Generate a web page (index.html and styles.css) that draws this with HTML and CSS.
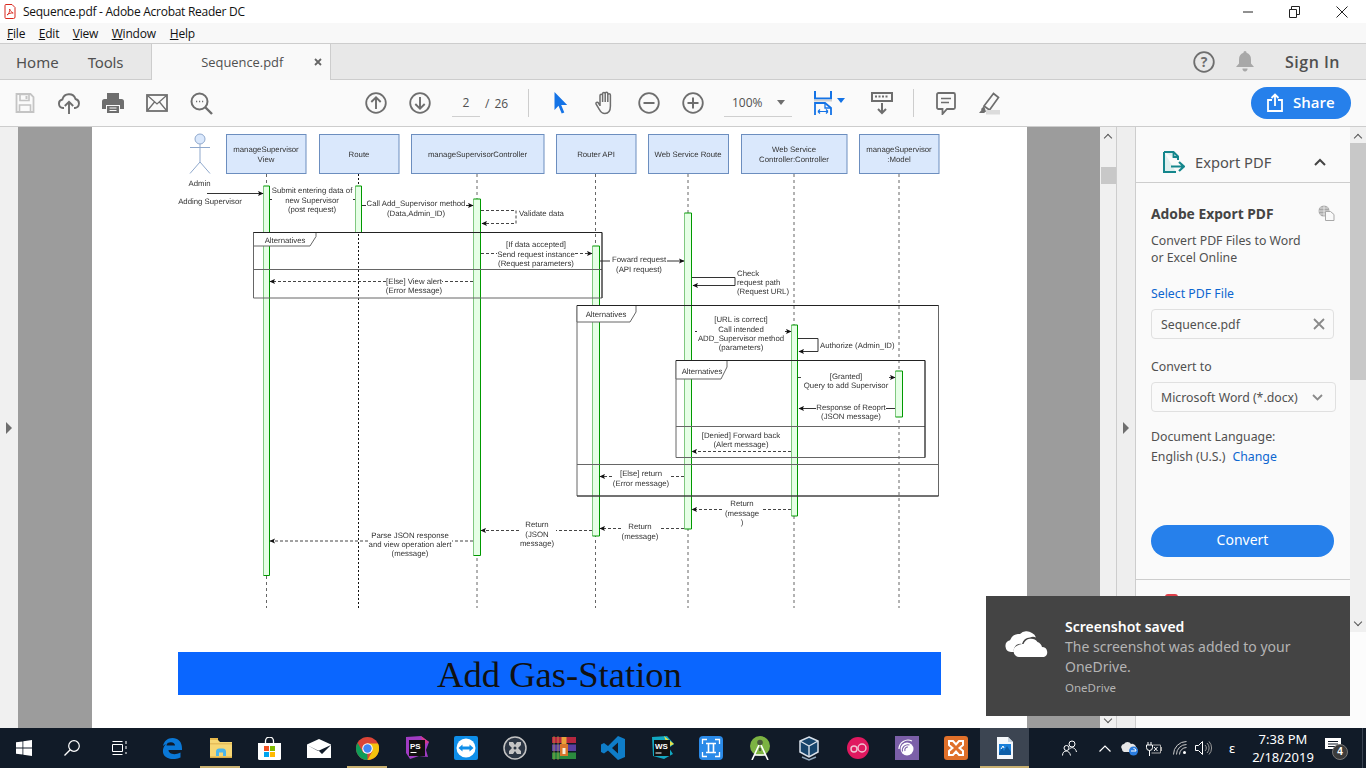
FILE: index.html
```html
<!DOCTYPE html>
<html lang="en">
<head>
<meta charset="utf-8">
<title>Sequence.pdf - Adobe Acrobat Reader DC</title>
<link rel="stylesheet" href="styles.css">
</head>
<body>
<div class="app">
  <header class="titlebar">
    <svg class="pdf-ico" width="12" height="15" viewBox="0 0 11 15"><path d="M1.500.5h6l3 3v9.500a1.500 1.500 0 0 1-1.500 1.500h-7.500a1 1 0 0 1-1-1v-12a1 1 0 0 1 1-1z" fill="#fff" stroke="#d8261c"/><path d="M2.500 11c2-1 3-4 2.600-6 .8 2 2 3.500 3.600 4-2-.2-4.500.4-6.200 2z" fill="none" stroke="#d8261c" stroke-width=".9"/></svg>
    <span class="title-text">Sequence.pdf - Adobe Acrobat Reader DC</span>
    <div class="winctl">
      <svg width="10" height="2" viewBox="0 0 10 2"><path d="M0 1h10" stroke="#222"/></svg>
      <svg width="11" height="12" viewBox="0 0 11 12"><path d="M.5 3.500h7v8h-7zM2.500 3.500v-3h8v8h-3" fill="none" stroke="#222"/></svg>
      <svg width="12" height="12" viewBox="0 0 12 12"><path d="M.5.5l11 11M11.500.5l-11 11" stroke="#222"/></svg>
    </div>
  </header>
  <nav class="menubar">
    <span class="menu"><u>F</u>ile</span><span class="menu"><u>E</u>dit</span><span class="menu"><u>V</u>iew</span><span class="menu"><u>W</u>indow</span><span class="menu"><u>H</u>elp</span>
  </nav>
  <div class="tabbar">
    <span class="tab-link tab-home">Home</span>
    <span class="tab-link tab-tools">Tools</span>
    <div class="doc-tab">
      <span class="doc-tab-name">Sequence.pdf</span>
      <svg class="doc-tab-x" width="8" height="8" viewBox="0 0 8 8"><path d="M1 1l6 6M7 1l-6 6" stroke="#666" stroke-width="1.800"/></svg>
    </div>
    <div class="tab-right">
      <svg width="22" height="22" viewBox="0 0 22 22"><circle cx="11" cy="11" r="9.800" fill="none" stroke="#6e6e6e" stroke-width="1.800"/><text x="11" y="16" class="help-q">?</text></svg>
      <svg class="bell" width="18" height="21" viewBox="0 0 18 21"><path d="M9 0c1 0 1.500.8 1.500 1.800 3 .8 4.500 3.300 4.500 6.700v4l3 3.500H0l3-3.500v-4c0-3.400 1.500-5.900 4.500-6.700C7.500.8 8 0 9 0zM6.500 17.500h5A2.500 2.500 0 0 1 9 20.500a2.500 2.500 0 0 1-2.500-3z" fill="#a8a8a8"/></svg>
      <span class="signin">Sign In</span>
    </div>
  </div>
  <div class="toolbar">
    <div class="tgroup">
      <svg width="22" height="22" viewBox="0 0 22 22"><path d="M2.500 2h14l3 3v15h-17z" fill="none" stroke="#c4c4c4" stroke-width="1.800"/><path d="M6 2.500h9v6H6zM5.500 13h11v7h-11z" fill="none" stroke="#c4c4c4" stroke-width="1.600"/><path d="M11.500 4h2v3h-2z" fill="#c4c4c4"/></svg>
      <svg width="22" height="22" viewBox="0 0 22 22"><path d="M6 16H5a4.300 4.300 0 0 1-.6-8.500A6.800 6.800 0 0 1 17.500 7a4.600 4.600 0 0 1-.5 9h-1" fill="none" stroke="#6e6e6e" stroke-width="1.900"/><path d="M11 22V10M6.800 14l4.200-4.200 4.200 4.200" fill="none" stroke="#6e6e6e" stroke-width="1.900"/></svg>
      <svg width="22" height="22" viewBox="0 0 22 22"><path d="M5 1h12v6H5z" fill="#6e6e6e"/><path d="M2.500 7h17A2.500 2.500 0 0 1 22 9.500V17h-4v-4H4v4H0V9.500A2.500 2.500 0 0 1 2.500 7z" fill="#6e6e6e"/><path d="M5 14h12v7H5z" fill="#6e6e6e"/><path d="M7.500 16h7M7.500 18.500h7" stroke="#fafafa" stroke-width="1.100"/></svg>
      <svg width="22" height="22" viewBox="0 0 22 22"><rect x="1" y="3" width="20" height="16" fill="none" stroke="#6e6e6e" stroke-width="1.800"/><path d="M1.500 3.500L11 12l9.500-8.500M1.500 18.500L8.500 10M20.500 18.500L13.500 10" fill="none" stroke="#6e6e6e" stroke-width="1.300"/></svg>
      <svg width="23" height="23" viewBox="0 0 23 23"><circle cx="9.500" cy="9.500" r="8" fill="none" stroke="#6e6e6e" stroke-width="2"/><path d="M15 15l7 7" stroke="#6e6e6e" stroke-width="2.400"/><path d="M6 9.500h1.200M9 9.500h1.200M12 9.500h1.200" stroke="#6e6e6e" stroke-width="1.500"/></svg>
    </div>
    <div class="tgroup tg-nav">
      <svg width="22" height="22" viewBox="0 0 22 22"><circle cx="11" cy="11" r="9.800" fill="none" stroke="#6e6e6e" stroke-width="1.800"/><path d="M11 17V5.500M6.300 10L11 5.300 15.700 10" fill="none" stroke="#6e6e6e" stroke-width="1.900"/></svg>
      <svg width="22" height="22" viewBox="0 0 22 22"><circle cx="11" cy="11" r="9.800" fill="none" stroke="#6e6e6e" stroke-width="1.800"/><path d="M11 5v11.500M6.300 12L11 16.700 15.700 12" fill="none" stroke="#6e6e6e" stroke-width="1.900"/></svg>
    </div>
    <div class="pager"><span class="page-input">2</span><span class="page-slash">/</span><span class="page-total">26</span></div>
    <span class="tsep sep-a"></span>
    <div class="tgroup tg-tools">
      <svg width="22" height="22" viewBox="0 0 22 22"><path d="M4.500 0v18l4-4.300 3.200 7.800 2.600-1.100-3.100-7.500h6z" fill="#1473e6"/></svg>
      <svg width="22" height="24" viewBox="0 0 22 24"><path d="M6 15V4.500a1.300 1.300 0 0 1 2.600 0V11M8.600 11V2.800a1.300 1.300 0 0 1 2.600 0V11M11.200 11V2.500a1.300 1.300 0 0 1 2.600 0V11M13.800 11V4a1.300 1.300 0 0 1 2.600 0v11c0 5-2 7.500-5.500 7.500-3 0-4.300-1.500-5.500-4L2 13c-.6-1.400 1.400-2.500 2.300-1.200L6 14.500" fill="none" stroke="#6e6e6e" stroke-width="1.500"/></svg>
      <svg width="22" height="22" viewBox="0 0 22 22"><circle cx="11" cy="11" r="9.800" fill="none" stroke="#6e6e6e" stroke-width="1.800"/><path d="M5.500 11h11" stroke="#6e6e6e" stroke-width="2"/></svg>
      <svg width="22" height="22" viewBox="0 0 22 22"><circle cx="11" cy="11" r="9.800" fill="none" stroke="#6e6e6e" stroke-width="1.800"/><path d="M5.500 11h11M11 5.500v11" stroke="#6e6e6e" stroke-width="2"/></svg>
    </div>
    <div class="zoombox"><span class="zoom-val">100%</span><span class="caret-gray"></span></div>
    <div class="fit">
      <svg width="18" height="24" viewBox="0 0 18 24"><path d="M1 0v7.500h16V0" fill="none" stroke="#1473e6" stroke-width="2"/><path d="M0 9.500h18" stroke="#d0d0d0" stroke-width="2"/><path d="M1 24V12h10l6 5v7" fill="none" stroke="#1473e6" stroke-width="1.800"/><path d="M11 12v5h6" fill="none" stroke="#1473e6" stroke-width="1.300"/><path d="M4 20.500h10M4 20.500l2-2M4 20.500l2 2M14 20.500l-2-2M14 20.500l-2 2" fill="none" stroke="#1473e6" stroke-width="1.200"/></svg>
      <span class="caret-blue"></span>
    </div>
    <svg class="read-ico" width="22" height="24" viewBox="0 0 22 24"><path d="M1 2h20v8H1z" fill="none" stroke="#6e6e6e" stroke-width="2"/><path d="M4 5.500h14" stroke="#6e6e6e" stroke-width="2" stroke-dasharray="2 1.500"/><path d="M11 12v10M7 18l4 4 4-4" fill="none" stroke="#6e6e6e" stroke-width="2"/></svg>
    <span class="tsep sep-b"></span>
    <svg class="comment-ico" width="20" height="23" viewBox="0 0 20 23"><path d="M2.500 1h15A1.500 1.500 0 0 1 19 2.500v13a1.500 1.500 0 0 1-1.500 1.500H11l-4.500 5v-5h-4A1.500 1.500 0 0 1 1 15.500v-13A1.500 1.500 0 0 1 2.500 1z" fill="none" stroke="#6e6e6e" stroke-width="1.800"/><path d="M5 6.500h10M5 10.500h8" stroke="#6e6e6e" stroke-width="1.500"/></svg>
    <svg class="hl-ico" width="22" height="23" viewBox="0 0 22 23"><path d="M15.500 1.500l5 4-9 12.500-5.500-4z" fill="none" stroke="#6e6e6e" stroke-width="1.700"/><path d="M6 14l-3 3 .5 1L1 21h5l2-1.500z" fill="#6e6e6e"/><path d="M8 18h14v4.500H8z" fill="#dcdcdc"/></svg>
    <button class="share">
      <svg width="16" height="19" viewBox="0 0 16 19"><path d="M5 7H1v11h14V7h-4" fill="none" stroke="#fff" stroke-width="1.800"/><path d="M8 13V1.500M4.500 5L8 1.500 11.500 5" fill="none" stroke="#fff" stroke-width="1.800"/></svg>
      <span>Share</span>
    </button>
  </div>
  <main class="workspace">
    <div class="left-gutter"><span class="tri-right"></span></div>
    <div class="doc-area">
      <article class="page">
        <svg class="diagram" width="935" height="490" viewBox="92 127 935 490">
          <defs>
            <marker id="ah" markerUnits="userSpaceOnUse" markerWidth="6" markerHeight="6" refX="5" refY="3" orient="auto"><path d="M0 .4L5.500 3 0 5.600 1.200 3z" fill="#111"/></marker>
          </defs>
          <g class="life">
            <path d="M266.500 174V608M477 174V608M595.500 174V608M688 174V608M794 174V608M899 174V608"/>
          </g>
          <path class="life-black" d="M358.500 174V608"/>
          <g class="box">
            <rect x="226.500" y="134.500" width="79.500" height="39"/>
            <rect x="319.500" y="134.500" width="79.500" height="39"/>
            <rect x="411.500" y="134.500" width="132.500" height="39"/>
            <rect x="556.500" y="134.500" width="79.500" height="39"/>
            <rect x="648.500" y="134.500" width="80" height="39"/>
            <rect x="741.500" y="134.500" width="105.500" height="39"/>
            <rect x="859.500" y="134.500" width="79.500" height="39"/>
          </g>
          <g class="dt mid">
            <text x="266" y="152">manageSupervisor</text><text x="266" y="161.500">View</text>
            <text x="359" y="157">Route</text>
            <text x="477.500" y="157">manageSupervisorController</text>
            <text x="596" y="157">Router API</text>
            <text x="688" y="157">Web Service Route</text>
            <text x="794" y="152">Web Service</text><text x="794" y="161.500">Controller:Controller</text>
            <text x="899" y="152">manageSupervisor</text><text x="899" y="161.500">:Model</text>
          </g>
          <g class="actor">
            <circle cx="200" cy="139" r="5"/>
            <path d="M200 144v18M190 147.500h20M200 162l-10 11.500M200 162l10 11.500"/>
          </g>
          <g class="dt mid">
            <text x="199.500" y="186">Admin</text>
            <text x="210" y="203.500">Adding Supervisor</text>
          </g>
          <g class="act">
            <path class="act-fill" d="M263.500 186h6v389.500h-6zM355.500 186h6v46h-6zM473.500 199h7v356.500h-7zM592.500 246h7v290h-7zM684.500 213h7v316h-7zM791.500 325h6v191h-6zM895.500 371h7v46h-7z"/>
            <path class="act-l" d="M263.500 186v389.500M355.500 186v46M473.500 199v356.500M592.500 246v290M684.500 213v316M791.500 325v191M895.500 371v46"/>
            <path class="act-r" d="M263.500 186h6v389.500h-6M355.500 186h6v46M473.500 199h7v356.500h-7M592.500 246h7v290h-7M684.500 213h7v316h-7M791.500 325h6v191h-6M895.500 371h7v46h-7"/>
          </g>
          <g class="frame">
            <path d="M253.500 232.500h348.500v65.500h-348.500z"/>
            <path d="M253.500 269.500h348.500"/>
            <path class="tab" d="M253.500 232.500h62.500v4l-6 9.500h-56.500z"/>
            <path d="M577 305.500h361.500v190.500h-361.500z"/>
            <path d="M577 464.500h361.500"/>
            <path class="tab" d="M577 305.500h59v6.500l-6 10h-53z"/>
            <path d="M676 360.500h249v97h-249z"/>
            <path d="M676 426.500h249"/>
            <path class="tab" d="M676 360.500h51v6.500l-6 12h-45z"/>
          </g>
          <path class="frame-dark" d="M253.500 232.500H602V298M577 305.500H938.500M577 496H938.500M676 360.500H925V457.500"/>
          <g class="dt mid">
            <text x="285" y="243">Alternatives</text>
            <text x="606" y="317">Alternatives</text>
            <text x="702" y="373.500">Alternatives</text>
          </g>
          <g class="msg">
            <path marker-end="url(#ah)" d="M207 193.500H263"/>
            <path d="M270 199.500h2M353 199.500h2"/>
            <path marker-end="url(#ah)" d="M362 205.500H366M466 205.500H473"/>
            <path marker-end="url(#ah)" d="M600 261H610M667 261H684"/>
            <path marker-end="url(#ah)" d="M692 277.500H735V285.500H693"/>
            <path d="M695 331.500h2"/>
            <path marker-end="url(#ah)" d="M785 331.500H791"/>
            <path marker-end="url(#ah)" d="M798 338.500H818V351.500H799"/>
            <path d="M895 408.500H886"/>
            <path marker-end="url(#ah)" d="M816 408.500H799"/>
          </g>
          <g class="msg dash">
            <path marker-end="url(#ah)" d="M481 210.500H516V223.500H482"/>
            <path d="M481 253.500H497"/>
            <path marker-end="url(#ah)" d="M575 253.500H592"/>
            <path d="M473 281.500H442"/>
            <path marker-end="url(#ah)" d="M386 281.500H270"/>
            <path d="M798 377.500H803"/>
            <path marker-end="url(#ah)" d="M889 377.500H895"/>
            <path marker-end="url(#ah)" d="M791 451.500H692"/>
            <path d="M684 476.500H671"/>
            <path marker-end="url(#ah)" d="M612 476.500H600"/>
            <path d="M791 509.500H762"/>
            <path marker-end="url(#ah)" d="M722 509.500H692"/>
            <path d="M684 528.500H660"/>
            <path marker-end="url(#ah)" d="M621 528.500H600"/>
            <path d="M592 530.500H556"/>
            <path marker-end="url(#ah)" d="M519 530.500H481"/>
            <path d="M473 541H452"/>
            <path marker-end="url(#ah)" d="M368 541H270"/>
          </g>
          <g class="dt mid">
            <text x="312" y="193">Submit entering data of</text><text x="312" y="202.500">new Supervisor</text><text x="312" y="212">(post request)</text>
            <text x="416" y="206">Call Add_Supervisor method</text><text x="416" y="216">(Data,Admin_ID)</text>
            <text x="536" y="247">[If data accepted]</text><text x="536" y="256.500">Send request instance</text><text x="536" y="266">(Request parameters)</text>
            <text x="414" y="284">[Else] View alert</text><text x="414" y="293">(Error Message)</text>
            <text x="639" y="262">Foward request</text><text x="639" y="272">(API request)</text>
            <text x="741" y="322">[URL is correct]</text><text x="741" y="331.500">Call intended</text><text x="741" y="341">ADD_Supervisor method</text><text x="741" y="350">(parameters)</text>
            <text x="846" y="379">[Granted]</text><text x="846" y="388">Query to add Supervisor</text>
            <text x="851" y="410">Response of Reoprt</text><text x="851" y="419">(JSON message)</text>
            <text x="741" y="438">[Denied] Forward back</text><text x="741" y="447">(Alert message)</text>
            <text x="641" y="476">[Else] return</text><text x="641" y="486">(Error message)</text>
            <text x="742" y="506">Return</text><text x="742" y="516">(message</text><text x="742" y="525">)</text>
            <text x="640" y="529">Return</text><text x="640" y="539">(message)</text>
            <text x="537" y="527">Return</text><text x="537" y="536.500">(JSON</text><text x="537" y="546">message)</text>
            <text x="410" y="537.500">Parse JSON response</text><text x="410" y="547">and view operation alert</text><text x="410" y="556">(message)</text>
          </g>
          <g class="dt">
            <text x="519" y="216">Validate data</text>
            <text x="737" y="276">Check</text><text x="737" y="285">request path</text><text x="737" y="294">(Request URL)</text>
            <text x="820" y="348">Authorize (Admin_ID)</text>
          </g>
        </svg>
        <h1 class="section-title">Add Gas-Station</h1>
      </article>
    </div>
    <div class="vscroll">
      <span class="chev-up"></span>
      <span class="vthumb"></span>
      <span class="chev-down vs-down"></span>
    </div>
    <div class="strip"><span class="tri-right"></span></div>
    <aside class="panel">
      <div class="panel-head">
        <svg width="22" height="22" viewBox="0 0 22 22"><path d="M1 1h9.500L15 5.500V9M1 1v20h12" fill="#dff0ef" stroke="#14868c" stroke-width="2"/><path d="M10.500 1v5H15" fill="none" stroke="#14868c" stroke-width="1.800"/><path d="M8 15.500h12M16 11l5 4.500-5 4.500" fill="none" stroke="#14868c" stroke-width="2.200"/></svg>
        <span class="head-name">Export PDF</span>
        <svg class="head-chev" width="12" height="8" viewBox="0 0 12 8"><path d="M1 7l5-5 5 5" fill="none" stroke="#444" stroke-width="2"/></svg>
      </div>
      <section class="panel-body">
        <div class="pb-title"><strong>Adobe Export PDF</strong>
          <svg width="17" height="16" viewBox="0 0 17 16"><circle cx="6" cy="6" r="5.500" fill="#a8a8a8"/><path d="M.5 6h11M6 .5v11M2 3h8M2 9h8" stroke="#fafafa" stroke-width=".7"/><path d="M7.500 6.500h5l3.500 3v6h-8.500z" fill="#fafafa" stroke="#a8a8a8"/></svg>
        </div>
        <p class="pb-desc">Convert PDF Files to Word<br>or Excel Online</p>
        <div class="pb-label pb-link lbl-select">Select PDF File</div>
        <div class="field">
          <span>Sequence.pdf</span>
          <svg width="12" height="12" viewBox="0 0 12 12"><path d="M1 1l10 10M11 1L1 11" stroke="#8a8a8a" stroke-width="1.800"/></svg>
        </div>
        <div class="pb-label lbl-convert">Convert to</div>
        <div class="field field-select">
          <span>Microsoft Word (*.docx)</span>
          <svg width="11" height="7" viewBox="0 0 11 7"><path d="M1 1l4.500 4.500L10 1" fill="none" stroke="#8a8a8a" stroke-width="1.800"/></svg>
        </div>
        <div class="pb-label lbl-lang">Document Language:</div>
        <div class="pb-label">English (U.S.)<span class="pb-link change">Change</span></div>
        <button class="convert">Convert</button>
      </section>
      <div class="next-tool"><span class="red-tab"></span></div>
    </aside>
    <div class="panel-scroll">
      <div class="ps-track">
        <span class="chev-up"></span>
        <span class="ps-thumb"></span>
        <span class="chev-down ps-down"></span>
      </div>
    </div>
    <div class="toast">
      <svg class="toast-cloud" width="44" height="27" viewBox="0 0 44 27"><path d="M7 22a6 6 0 0 1-1-11.800A9 9 0 0 1 16 4 9.500 9.500 0 0 1 28 3a8 8 0 0 1 4 4.500 7 7 0 0 0-6 0 9 9 0 0 0-8 6.500 6.500 6.500 0 0 0-8 8z" fill="#fff"/><path d="M15 27a6 6 0 0 1-1.500-11.600 8 8 0 0 1 6-1.400A8 8 0 0 1 33.500 12a7 7 0 0 1 4.500 5A5.200 5.200 0 0 1 40 27z" fill="#fff"/></svg>
      <div class="toast-text">
        <div class="toast-title">Screenshot saved</div>
        <div class="toast-msg">The screenshot was added to your<br>OneDrive.</div>
        <div class="toast-src">OneDrive</div>
      </div>
    </div>
  </main>
  <footer class="taskbar">
    <div class="tb-sys">
      <span class="cell48"><svg width="16" height="16" viewBox="0 0 16 16"><path d="M0 2.300l6.500-.9v6.200H0zM7.300 1.300L16 0v7.600H7.300zM0 8.400h6.500v6.200L0 13.700zM7.300 8.400H16V16l-8.700-1.300z" fill="#fff"/></svg></span>
      <span class="cell48"><svg width="16" height="16" viewBox="0 0 16 16"><circle cx="10" cy="6" r="5.300" fill="none" stroke="#fff" stroke-width="1.200"/><path d="M6.200 9.800L.5 15.500" stroke="#fff" stroke-width="1.300"/></svg></span>
      <span class="cell48"><svg width="16" height="16" viewBox="0 0 16 16"><path d="M.5 4.500h10v7H.5zM.5 1.500h10M.5 14.500h10M14 1v3M14 6v3M14 12v2" fill="none" stroke="#fff"/></svg></span>
    </div>
    <div class="tb-apps">
      <span class="cell"><svg width="20" height="21" viewBox="0 0 20 21"><path d="M1 8C2 3 5.500 0 10.500 0 16 0 20 3.500 20 10.500v1.500H6.500c0 3.500 5.500 6 12 2.500v5c-6.500 3-16 2-17.500-5C.5 10 3 5 8 3.500 5 5 4.500 6.500 4.500 7.500H13c0-3-5-5.500-12 .5z" fill="#0a78d7"/></svg></span>
      <span class="cell open"><svg width="22" height="20" viewBox="0 0 22 20"><path d="M0 2h8l2 2h12v16H0z" fill="#f7d774"/><path d="M0 0h8v2H0z" fill="#e6b84c"/><path d="M0 5h22v1.500H0z" fill="#e6bd5a"/><path d="M6 18v-4.500c0-2 1.500-3 3-3h4c1.500 0 3 1 3 3V18h-3v-3.500H9V18z" fill="#4cb6ea"/><path d="M0 18.500h22V20H0z" fill="#d9ac45"/></svg></span>
      <span class="cell"><svg width="23" height="23" viewBox="0 0 23 23"><path d="M7.500 6.500V4a4 4 0 0 1 8 0v2.500" fill="none" stroke="#fff" stroke-width="1.300"/><path d="M0 6h23v15.500a1.500 1.500 0 0 1-1.500 1.500h-20A1.500 1.500 0 0 1 0 21.500z" fill="#fff"/><path d="M6 9h5v5H6z" fill="#f25022"/><path d="M12 9h5v5h-5z" fill="#7fba00"/><path d="M6 15h5v5H6z" fill="#00a4ef"/><path d="M12 15h5v5h-5z" fill="#ffb900"/></svg></span>
      <span class="cell"><svg width="24" height="19" viewBox="0 0 24 19"><path d="M12 0l12 5.500v13.500H0V5.500z" fill="#fff"/><path d="M0 6l11 6 13-6-9 9-3-3z" fill="#111c2a"/></svg></span>
      <span class="cell open"><svg width="23" height="23" viewBox="0 0 23 23"><circle cx="11.500" cy="11.500" r="11.500" fill="#db4437"/><path d="M11.500 23a11.500 11.500 0 0 1-10-17.200l5.800 10 4 0z" fill="#0f9d58"/><path d="M11.500 6.500H22a11.500 11.500 0 0 1-10.500 16.500l5-9z" fill="#f4c20d"/><circle cx="11.500" cy="11.500" r="5.300" fill="#fff"/><circle cx="11.500" cy="11.500" r="4.200" fill="#4285f4"/></svg></span>
      <span class="cell"><svg width="24" height="24" viewBox="0 0 24 24"><path d="M1 1l15-1 8 6-3 8 2 7-9-1-9 3-4-6z" fill="#a13cc4"/><path d="M16 0l8 6-6 3z" fill="#d63b8d"/><rect x="4" y="4" width="16" height="16" fill="#111"/><text x="5" y="12.500" class="ws-text">PS</text><path d="M5.500 16.500h6" stroke="#fff"/></svg></span>
      <span class="cell"><svg width="24" height="24" viewBox="0 0 24 24"><rect width="24" height="24" rx="2" fill="#0e8ee9"/><circle cx="12" cy="12" r="9.500" fill="#fff"/><path d="M4.500 12l4-3.500v2h7v-2l4 3.500-4 3.500v-2h-7v2z" fill="#0e8ee9"/></svg></span>
      <span class="cell"><svg width="24" height="24" viewBox="0 0 24 24"><circle cx="12" cy="12" r="11" fill="#2c3644" stroke="#c4c4c4" stroke-width="1.500"/><path d="M6 6h4l2 3 2-3h4v3l-3 3 3 3v3h-4l-2-3-2 3H6v-3l3-3-3-3z" fill="#c4c4c4"/><circle cx="12" cy="12" r="1.500" fill="#2c3644"/></svg></span>
      <span class="cell"><svg width="24" height="24" viewBox="0 0 24 24"><path d="M0 1h24v6H0z" fill="#b5273f"/><path d="M0 8.500h24v6.500H0z" fill="#5a3fa0"/><path d="M0 16.500h24V23H0z" fill="#2b8a3e"/><path d="M2 0v24M6 0v24" stroke="#d8c048" stroke-width=".8" opacity=".7"/><path d="M8 8h8v12H8z" fill="#d9762c"/><path d="M9.500 1h5v7h-5z" fill="#e8a33a"/><path d="M10.500 12h3v6h-3z" fill="#f5efdc"/></svg></span>
      <span class="cell"><svg width="24" height="24" viewBox="0 0 24 24"><path d="M17 0l7 3v18l-7 3-10-9.500-4 3-3-1.500V8.500L3 7l4 3zM17 6.500l-6 5.500 6 5.500z" fill="#0f7dc8"/></svg></span>
      <span class="cell"><svg width="24" height="24" viewBox="0 0 24 24"><path d="M2 1l15-1 7 8-5 4 4 6-9 5-11-3z" fill="#12a8c2"/><path d="M14 0l10 8-6 3z" fill="#e6e04a"/><rect x="4" y="4" width="16" height="16" fill="#111"/><text x="5" y="13" class="ws-text">WS</text><path d="M5.500 17h6" stroke="#fff"/></svg></span>
      <span class="cell"><svg width="24" height="24" viewBox="0 0 24 24"><rect width="24" height="24" rx="4" fill="#2a8ae8"/><path d="M3.500 8V3.500H8M16 3.500h4.500V8M3.500 16v4.500H8M16 20.500h4.500V16" fill="none" stroke="#fff" stroke-width="1.300"/><path d="M7 7.500h10M7 16.500h10M9.500 7.500v9M14.500 7.500v9" fill="none" stroke="#fff" stroke-width="1.600"/></svg></span>
      <span class="cell"><svg width="22" height="24" viewBox="0 0 22 24"><circle cx="11" cy="10" r="10" fill="#7cb342"/><path d="M3 24L11 7l8 17M5 19h12" fill="none" stroke="#fff" stroke-width="1.600"/><circle cx="11" cy="6.500" r="2.800" fill="#4a5a3a"/><path d="M11 12v3" stroke="#4a5a3a" stroke-width="2"/></svg></span>
      <span class="cell"><svg width="24" height="25" viewBox="0 0 24 25"><path d="M12 1l9 4v11l-9 5-9-5V5z" fill="#17456c" stroke="#d9e1ea" stroke-width="1.500"/><path d="M3 5l9 5 9-5M12 10v11" fill="none" stroke="#d9e1ea" stroke-width="1.400"/><path d="M5 21l7 3 7-3" fill="none" stroke="#8fa6bb" stroke-width="1.500"/></svg></span>
      <span class="cell"><svg width="22" height="22" viewBox="0 0 22 22"><circle cx="11" cy="11" r="11" fill="#e0185f"/><circle cx="7" cy="12" r="3" fill="none" stroke="#f0c4d2" stroke-width="1.400"/><circle cx="15" cy="11" r="4" fill="none" stroke="#f0c4d2" stroke-width="1.400"/></svg></span>
      <span class="cell"><svg width="24" height="24" viewBox="0 0 24 24"><rect width="24" height="24" fill="#7b5fa8"/><circle cx="12" cy="13" r="6.500" fill="#fff"/><path d="M5 15a8 8 0 0 1 12-9M7.500 15.500a5.500 5.500 0 0 1 7-6.500M10 15a3 3 0 0 1 3-4" fill="none" stroke="#7b5fa8" stroke-width="1.100"/><path d="M4 13a9 9 0 0 1 13-8" fill="none" stroke="#fff" stroke-width="1.200"/></svg></span>
      <span class="cell"><svg width="24" height="24" viewBox="0 0 24 24"><rect width="24" height="24" rx="3" fill="#e0702a"/><path d="M5 5h4l3 3.500L15 5h4v4l-3.500 3L19 15v4h-4l-3-3.500L9 19H5v-4l3.500-3L5 9z" fill="none" stroke="#fff" stroke-width="2"/></svg></span>
      <span class="cell cell-active"><svg width="16" height="22" viewBox="0 0 16 22"><path d="M0 0h11l5 5v17H0z" fill="#f4f7fb"/><path d="M11 0v5h5z" fill="#c8d3de"/><path d="M2 7h12v11H2z" fill="#1a7fd9"/><path d="M2 16l3-5 2 3 3-5 4 6v3H2z" fill="#0e5ea8"/><path d="M4 12l2-3 1 2" fill="none" stroke="#fff"/></svg></span>
    </div>
    <div class="tray">
      <svg class="tr-people" width="15" height="16" viewBox="0 0 15 16"><circle cx="10" cy="4" r="3" fill="none" stroke="#fff"/><circle cx="4.500" cy="8" r="2.500" fill="none" stroke="#fff"/><path d="M.5 15.500c0-6 7-6 8 0M7.500 9c2-2.500 6-1.500 7 3" fill="none" stroke="#fff"/></svg>
      <svg class="tr-caret" width="12" height="7" viewBox="0 0 12 7"><path d="M.5 6.500L6 1l5.500 5.500" fill="none" stroke="#fff" stroke-width="1.200"/></svg>
      <svg class="tr-cloud" width="18" height="15" viewBox="0 0 18 15"><path d="M1 8a3 3 0 0 1 2-5 4 4 0 0 1 7 0 4 4 0 0 1 5 3 3 3 0 0 1 0 5H3a3 3 0 0 1-2-3z" fill="#e6e6e6"/><circle cx="12.500" cy="10" r="4.500" fill="#2a7de1"/><path d="M10 10h5M12.500 7.500a2.500 2.500 0 0 1 2.500 2.500" fill="none" stroke="#fff"/></svg>
      <svg class="tr-power" width="16" height="15" viewBox="0 0 16 15"><path d="M2 1v3M5 1v3M.5 4h6v2.500a3 3 0 0 1-6 0zM3.500 9.500V15" fill="none" stroke="#fff"/><path d="M7 4h7.500v8H5.500" fill="none" stroke="#aaa"/><path d="M8 6l3.500 4M11.500 6L8 10" stroke="#fff"/><path d="M15 6h1v4h-1z" fill="#aaa"/></svg>
      <svg class="tr-wifi" width="14" height="14" viewBox="0 0 14 14"><path d="M.5 13.500a13 13 0 0 1 13-13M3.500 13.500a10 10 0 0 1 10-10M6.500 13.500a7 7 0 0 1 7-7" fill="none" stroke="#ccc"/><circle cx="11.500" cy="11.500" r="1.500" fill="#fff"/></svg>
      <svg class="tr-vol" width="17" height="14" viewBox="0 0 17 14"><path d="M.5 4.500h3l4-4v13l-4-4h-3z" fill="none" stroke="#fff"/><path d="M10 4a4 4 0 0 1 0 6M12 2a7 7 0 0 1 0 10M14 .5a9.500 9.500 0 0 1 0 13" fill="none" stroke="#9a9a9a"/></svg>
      <span class="tr-lang">ε</span>
      <div class="clock"><span>7:38 PM</span><span>2/18/2019</span></div>
      <div class="notif">
        <svg width="16" height="14" viewBox="0 0 16 14"><path d="M0 0h16v11h-5l-3 3v-3H0z" fill="#fff"/><path d="M3 3.500h10M3 6h10M3 8.500h7" stroke="#111b28"/></svg>
        <span class="badge">4</span>
      </div>
      <span class="showdesk"></span>
    </div>
  </footer>
</div>
</body>
</html>
```
FILE: styles.css
```css
* { box-sizing: border-box; }
html, body { margin: 0; padding: 0; height: 100%; overflow: hidden; }
body { font-family: "Open Sans", "Noto Sans", sans-serif; color: #222; background: #fff; }
svg { display: block; flex: none; }
.app { width: 1366px; height: 768px; display: flex; flex-direction: column; overflow: hidden; }

/* title + menu */
.titlebar { height: 23px; display: flex; align-items: center; background: #fff; padding-left: 4px; flex: none; }
.pdf-ico { margin-top: -1px; }
.title-text { margin-left: 7px; font-size: 12px; letter-spacing: -.27px; color: #111; }
.winctl { margin-left: auto; display: flex; align-items: center; gap: 36px; padding-right: 18px; }
.menubar { height: 21px; background: #f8f8f8; border-bottom: 1px solid #cdcdcd; display: flex; align-items: center; flex: none; padding-left: 7px; font-size: 12px; letter-spacing: -.2px; color: #111; }
.menu { margin-right: 13.500px; }
.menu:nth-child(4) { margin-right: 14px; }

/* tabs */
.tabbar { height: 36px; background: #e8e8e8; border-bottom: 1px solid #cdcdcd; display: flex; align-items: center; flex: none; color: #505050; }
.tab-link { font-size: 15px; font-family: "Noto Sans", sans-serif; }
.tab-home { margin-left: 16px; }
.tab-tools { margin-left: 29px; letter-spacing: -.2px; }
.doc-tab { margin-left: 28px; width: 180px; height: 36px; background: #f9f9f9; border-left: 1px solid #cdcdcd; border-right: 1px solid #cdcdcd; display: flex; align-items: center; padding-left: 49px; font-size: 12.900px; color: #505050; }
.doc-tab-name { width: 113px; flex: none; }
.tab-right { margin-left: auto; display: flex; align-items: center; padding-right: 26px; }
.bell { margin-left: 21px; }
.help-q { font: 700 14px "Open Sans", sans-serif; fill: #6e6e6e; text-anchor: middle; }
.signin { margin-left: 31px; font: 600 16px "Open Sans", sans-serif; letter-spacing: .5px; color: #505050; }

/* toolbar */
.toolbar { height: 47px; background: #fafafa; border-bottom: 1px solid #cdcdcd; display: flex; align-items: center; flex: none; padding: 0 15px 0 14px; }
.tgroup { display: flex; align-items: center; gap: 22px; }
.tg-nav { margin-left: 152px; }
.pager { margin-left: 21px; width: 64px; display: flex; align-items: center; font-size: 12px; color: #505050; height: 28px; }
.page-input { width: 28px; height: 28px; line-height: 28px; text-align: center; border-bottom: 1px solid #cfcfcf; }
.page-slash { margin-left: 5px; }
.page-total { margin-left: 5px; }
.tsep { width: 1px; height: 28px; background: #cdcdcd; flex: none; }
.sep-a { margin-left: 12px; }
.tg-tools { margin-left: 21px; }
.zoombox { margin-left: 20px; width: 68px; height: 28px; border-bottom: 1px solid #cfcfcf; display: flex; align-items: center; padding-left: 8px; font-size: 12px; color: #505050; }
.caret-gray { margin-left: 14px; width: 0; height: 0; border-left: 4px solid transparent; border-right: 4px solid transparent; border-top: 5px solid #6e6e6e; }
.fit { margin-left: 22px; width: 33px; display: flex; align-items: center; }
.caret-blue { margin-left: 5px; margin-top: -6px; width: 0; height: 0; border-left: 4px solid transparent; border-right: 4px solid transparent; border-top: 5px solid #1473e6; }
.read-ico { margin-left: 24px; }
.sep-b { margin-left: 20px; }
.comment-ico { margin-left: 22px; }
.hl-ico { margin-left: 22px; }
.share { margin-left: auto; width: 100px; height: 32px; border: 0; border-radius: 16px; background: #2680eb; color: #fff; font: 600 15px "Open Sans", sans-serif; display: flex; align-items: center; padding: 0 0 2px 16px; gap: 10px; }

/* workspace */
.workspace { flex: 1; min-height: 0; display: flex; position: relative; }
.left-gutter { width: 18px; background: #f0f0f0; display: flex; align-items: center; justify-content: center; flex: none; }
.tri-right { width: 0; height: 0; border-top: 6px solid transparent; border-bottom: 6px solid transparent; border-left: 6px solid #6e6e6e; }
.doc-area { width: 1082px; background: #9c9c9c; padding: 0 73px 0 74px; flex: none; overflow: hidden; }
.page { width: 935px; height: 601px; background: #fff; }
.diagram { filter: blur(.3px); }
.diagram text { font-family: "Liberation Sans", Arial, sans-serif; font-size: 7.800px; }
.dt { fill: #333; text-rendering: geometricPrecision; }
.mid { text-anchor: middle; }
.life path { fill: none; stroke: #666; stroke-width: 1; stroke-dasharray: 3 3; }
.life-black { fill: none; stroke: #111; stroke-width: 1; stroke-dasharray: 2 2; }
.box rect { fill: #dae8fc; stroke: #6c8ebf; stroke-width: 1; }
.actor circle, .actor path { fill: #dae8fc; stroke: #8fa8cc; stroke-width: 1; }
.actor path { fill: none; }
.act-fill { fill: #e6ffe6; stroke: none; }
.act-l { fill: none; stroke: #80c880; }
.act-r { fill: none; stroke: #009900; }
.frame path { fill: none; stroke: #666; stroke-width: 1; }
.frame .tab { fill: #fff; }
.frame-dark { fill: none; stroke: #111; stroke-width: 1; opacity: .8; }
.msg path { fill: none; stroke: #333; stroke-width: 1; }
.msg.dash path { fill: none; stroke: #444; stroke-dasharray: 3 2; }
.section-title { margin: 35px 0 0 86px; width: 763px; height: 43px; background: #0a66ff; font: 400 36.600px/45px "Liberation Serif", "Times New Roman", serif; color: #111; text-align: center; }

/* scrollbars */
.vscroll { width: 17px; background: #f0f0f0; border-right: 1px solid #cdcdcd; flex: none; position: relative; }
.chev-up, .chev-down { position: absolute; left: 50%; width: 6px; height: 6px; margin-left: -3px; border-left: 1.500px solid #555; border-top: 1.500px solid #555; }
.chev-up { top: 8px; transform: rotate(45deg); }
.chev-down { transform: rotate(225deg); }
.vs-down { bottom: 6px; }
.ps-down { bottom: 7px; }
.vthumb { position: absolute; left: 1px; right: 0; top: 40px; height: 17px; background: #c8c8c8; }
.strip { width: 19px; background: #eeeeee; border-right: 1px solid #cdcdcd; flex: none; display: flex; align-items: center; justify-content: center; }

/* panel */
.panel { width: 214px; background: #fafafa; flex: none; font-family: "Noto Sans", sans-serif; color: #505050; font-size: 12.300px; }
.panel-head { height: 56px; border-bottom: 1px solid #cdcdcd; display: flex; align-items: center; padding: 14px 0 0 27px; }
.head-name { margin-left: 10px; font-size: 14.700px; }
.head-chev { margin-left: 43px; }
.panel-body { height: 397px; border-bottom: 1px solid #cdcdcd; padding: 20px 15px 0; }
.pb-title { display: flex; align-items: center; justify-content: space-between; height: 20px; }
.pb-title strong { font-size: 13.800px; font-weight: 700; color: #444; }
.pb-desc { margin: 9px 0 0; line-height: 17px; }
.pb-label { height: 20px; line-height: 20px; }
.pb-link { color: #0d66d0; }
.lbl-select { margin-top: 18px; }
.lbl-convert { margin-top: 18px; }
.lbl-lang { margin-top: 15px; }
.change { margin-left: 7px; }
.field { margin-top: 5px; width: 183px; height: 30px; border: 1px solid #e0e0e0; border-radius: 4px; display: flex; align-items: center; justify-content: space-between; padding: 0 8px 0 9px; }
.field-select { margin-top: 5px; width: 185px; padding-right: 12px; }
.convert { display: block; margin-top: 58px; width: 183px; height: 32px; border: 0; border-radius: 16px; background: #2680eb; color: #fff; font: 400 14px/28px "Noto Sans", sans-serif; padding: 0 0 3px; }
.next-tool { padding: 14px 0 0 29px; }
.red-tab { display: block; width: 13px; height: 12px; background: #e0404a; border-radius: 3px 3px 0 0; }
.panel-scroll { width: 16px; flex: none; background: #fcfcfc; }
.ps-track { height: 505px; background: #f0f0f0; position: relative; }
.ps-thumb { position: absolute; left: 0; right: 0; top: 16px; height: 237px; background: #c8c8c8; }

/* toast */
.toast { position: absolute; left: 986px; top: 469px; width: 364px; height: 120px; background: #444; display: flex; color: #fff; padding: 21px 0 0 18px; }
.toast-cloud { margin-top: 13px; }
.toast-text { margin-left: 17px; font-family: "Noto Sans", sans-serif; }
.toast-title { font-size: 14px; font-weight: 600; line-height: 20px; }
.toast-msg { font-size: 14px; line-height: 20px; color: #b4b4b4; }
.toast-src { font-size: 11.500px; line-height: 20px; margin-top: 1px; color: #b4b4b4; }

/* taskbar */
.taskbar { height: 40px; flex: none; background: #111b28; display: flex; color: #fff; position: relative; }
.tb-sys { display: flex; width: 147px; flex: none; }
.cell48 { width: 48px; display: flex; align-items: center; justify-content: center; }
.tb-apps { display: flex; flex: none; }
.cell { width: 49px; height: 40px; display: flex; align-items: center; justify-content: center; position: relative; }
.cell.open::after, .cell-active::after { content: ""; position: absolute; left: 4px; right: 5px; bottom: 0; height: 2px; background: #c8b070; }
.cell-active { background: #3c4552; }
.cell-active::after { left: 0; right: 0; }
.ws-text { font: 700 8px "Liberation Sans", sans-serif; fill: #fff; }
.tray { flex: 1; display: flex; align-items: center; padding-left: 33px; position: relative; }
.tr-caret { margin-left: 22px; }
.tr-cloud { margin-left: 10px; }
.tr-power { margin-left: 7px; }
.tr-wifi { margin-left: 11px; }
.tr-vol { margin-left: 8px; }
.tr-lang { margin-left: 17px; width: 10px; font-size: 13px; font-family: "Noto Sans", sans-serif; }
.clock { margin-left: 13px; width: 62px; display: flex; flex-direction: column; align-items: center; font-size: 13px; line-height: 18px; font-family: "Noto Sans", sans-serif; }
.notif { margin-left: 11px; position: relative; width: 20px; height: 24px; padding-top: 2px; }
.badge { position: absolute; left: 7px; top: 8px; width: 16px; height: 16px; border-radius: 50%; background: #3b3b3b; border: 1px solid #777; font: 700 10px/14px "Liberation Sans", sans-serif; text-align: center; }
.showdesk { position: absolute; right: 3px; top: 0; bottom: 0; width: 1px; background: #3a4452; }
```
